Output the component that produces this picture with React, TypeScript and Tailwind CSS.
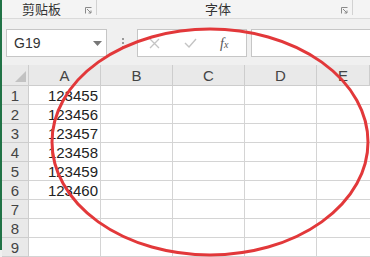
const cols = ['A', 'B', 'C', 'D', 'E'];
const values = ['123455', '123456', '123457', '123458', '123459', '123460', '', '', ''];

const Launcher = () => (
  <svg width="7" height="7" viewBox="0 0 7 7" className="text-[#8a8a8a]">
    <path d="M0.5 6.5V0.5H6.5" fill="none" stroke="currentColor" strokeWidth="1" />
    <path d="M2 2L6 6M3.5 6H6V3.5" fill="none" stroke="currentColor" strokeWidth="1" />
  </svg>
);

export default function App() {
  return (
    <div
      className="relative flex w-[370px] h-[257px] overflow-hidden bg-[#f0f0f0]"
      style={{ fontFamily: '"Liberation Sans", "Noto Sans CJK SC", sans-serif' }}
    >
      {/* green window edge */}
      <div className="w-[2px] h-[250px] bg-[#217346] shrink-0" />

      <div className="flex flex-col flex-1 min-w-0">
        {/* ribbon group labels */}
        <div
          className="flex items-start h-[19px] shrink-0 bg-[#f4f4f4] border-b border-[#dadada] text-[13px] text-[#333] leading-[15px] whitespace-nowrap"
          style={{ fontFamily: '"Noto Sans CJK SC", sans-serif' }}
        >
          <span className="ml-[20px] mt-[1px] shrink-0">剪贴板</span>
          <span className="ml-[24px] mt-[7px] shrink-0 leading-none"><Launcher /></span>
          <span className="ml-[4px] w-px h-[15px] bg-[#d2d2d2] shrink-0" />
          <span className="ml-[108px] mt-[1px] shrink-0">字体</span>
          <span className="ml-[110px] mt-[7px] shrink-0 leading-none"><Launcher /></span>
          <span className="ml-[4px] w-px h-[15px] bg-[#d2d2d2] shrink-0" />
        </div>

        {/* formula bar */}
        <div className="flex items-center h-[46px] shrink-0 pt-[2px]">
          <div className="flex items-center justify-between ml-[4px] w-[101px] h-[28px] bg-white border border-[#c6c6c6] pl-[7px] pr-[4px]">
            <span className="text-[14px] text-[#333]">G19</span>
            <svg width="9" height="5" viewBox="0 0 9 5"><path d="M0 0H9L4.5 5Z" fill="#777" /></svg>
          </div>
          <div className="flex flex-col gap-[2px] ml-[15px] w-[2px]">
            <span className="w-[2px] h-[2px] bg-[#9a9a9a]" />
            <span className="w-[2px] h-[2px] bg-[#9a9a9a]" />
            <span className="w-[2px] h-[2px] bg-[#9a9a9a]" />
          </div>
          <div className="flex items-center ml-[13px] w-[110px] h-[28px] bg-white border border-[#c6c6c6]">
            <svg width="11" height="11" viewBox="0 0 11 11" className="ml-[11px]">
              <path d="M1 1L10 10M10 1L1 10" stroke="#c4c4c4" strokeWidth="1.3" />
            </svg>
            <svg width="13" height="10" viewBox="0 0 13 10" className="ml-[24px]">
              <path d="M1 5L5 9L12 1" fill="none" stroke="#c4c4c4" strokeWidth="1.4" />
            </svg>
            <span className="ml-[23px] text-[14px] italic text-[#555]" style={{ fontFamily: '"Liberation Serif", serif' }}>
              f<span className="text-[10px]">x</span>
            </span>
          </div>
          <div className="ml-[4px] flex-1 h-[28px] bg-white border border-[#c6c6c6] border-r-0" />
        </div>

        {/* sheet */}
        <div className="grid grid-cols-[27px_72px_72px_72px_72px_1fr] grid-rows-[21px_repeat(9,19px)] text-[15px] leading-none">
          <div className="relative bg-[#e9e9e9] border-r border-b border-[#cdcdcd]">
            <svg width="11" height="11" viewBox="0 0 11 11" className="absolute right-[2px] bottom-[3px]">
              <path d="M11 0V11H0Z" fill="#c2c2c2" />
            </svg>
          </div>
          {cols.map((c) => (
            <div key={c} className="flex items-center justify-center bg-[#e9e9e9] border-r border-b border-[#cdcdcd] text-[#444]">
              {c}
            </div>
          ))}
          {values.map((v, i) => (
            <div key={i} className="contents">
              <div className="flex items-center justify-center bg-[#e9e9e9] border-r border-b border-[#cdcdcd] text-[#444]">
                {i + 1}
              </div>
              <div className="flex items-center justify-end pr-[2px] bg-white border-r border-b border-[#d4d4d4] text-[#222]">
                {v}
              </div>
              <div className="bg-white border-r border-b border-[#d4d4d4]" />
              <div className="bg-white border-r border-b border-[#d4d4d4]" />
              <div className="bg-white border-r border-b border-[#d4d4d4]" />
              <div className="bg-white border-b border-[#d4d4d4]" />
            </div>
          ))}
        </div>
      </div>

      {/* red hand-drawn ellipse marking the data */}
      <svg className="absolute inset-0 pointer-events-none" width="370" height="257" viewBox="0 0 370 257">
        <ellipse cx="210" cy="142" rx="158" ry="113" fill="none" stroke="#e2383a" strokeWidth="3" />
      </svg>
    </div>
  );
}
